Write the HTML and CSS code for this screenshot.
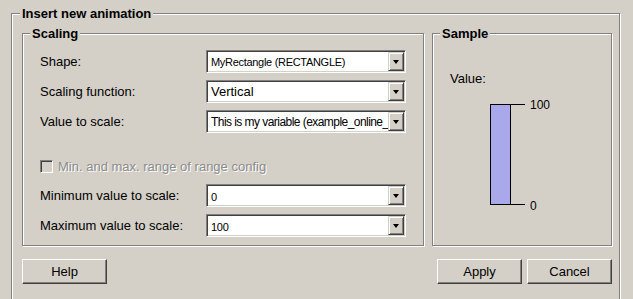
FILE: index.html
```html
<!DOCTYPE html>
<html lang="en">
<head>
  <meta charset="UTF-8">
  <title>Insert new animation</title>
  <link rel="stylesheet" href="styles.css">
</head>
<body>
  <div class="dialog">
    <span class="legend">Insert new animation</span>

    <div class="panels">
      <div class="group scaling">
        <span class="legend">Scaling</span>

        <div class="row">
          <label>Shape:</label>
          <div class="combo"><span class="value small">MyRectangle (RECTANGLE)</span><span class="drop"></span></div>
        </div>
        <div class="row">
          <label>Scaling function:</label>
          <div class="combo"><span class="value large">Vertical</span><span class="drop"></span></div>
        </div>
        <div class="row">
          <label>Value to scale:</label>
          <div class="combo"><span class="value tight">This is my variable (example_online_v</span><span class="drop"></span></div>
        </div>

        <div class="check">
          <span class="box"></span>
          <span class="disabled">Min. and max. range of range config</span>
        </div>

        <div class="row">
          <label>Minimum value to scale:</label>
          <div class="combo"><span class="value small low">0</span><span class="drop"></span></div>
        </div>
        <div class="row">
          <label>Maximum value to scale:</label>
          <div class="combo"><span class="value small low">100</span><span class="drop"></span></div>
        </div>
      </div>

      <div class="group sample">
        <span class="legend">Sample</span>
        <div class="value-label">Value:</div>
        <svg class="gauge" width="120" height="130" viewBox="0 0 120 130">
          <rect x="40.5" y="18.5" width="20" height="100" fill="#a8a8ea" stroke="#000"/>
          <line x1="60" y1="18.5" x2="75" y2="18.5" stroke="#000"/>
          <line x1="40" y1="118.5" x2="75" y2="118.5" stroke="#000"/>
          <text x="80" y="23" class="tick">100</text>
          <text x="80" y="124" class="tick">0</text>
        </svg>
      </div>
    </div>

    <div class="buttons">
      <button class="help">Help</button>
      <button>Apply</button>
      <button>Cancel</button>
    </div>
  </div>
</body>
</html>
```

FILE: styles.css
```css
html, body {
  margin: 0;
  overflow: hidden;
}
body {
  background: #d4d0c8;
  font-family: "Liberation Sans", Arial, sans-serif;
  font-size: 13px;
  color: #000;
}
.dialog {
  position: relative;
  margin: 13px 0 0 11px;
  width: 609px;
  box-sizing: border-box;
  border: 1px solid #808080;
  box-shadow: inset 1px 1px 0 #fff, 1px 1px 0 #fff;
  padding: 19px 7px 20px 10px;
}
.legend {
  position: absolute;
  top: -8px;
  left: 8px;
  padding: 0 2px;
  background: #d4d0c8;
  font-weight: bold;
  line-height: 15px;
}
.panels {
  display: flex;
  gap: 8px;
}
.group {
  position: relative;
  height: 213px;
  box-sizing: border-box;
  border: 1px solid #808080;
  box-shadow: inset 1px 1px 0 #fff, 1px 1px 0 #fff;
}
.scaling {
  width: 402px;
  padding: 16px 17px 0 17px;
}
.scaling .legend {
  left: 7px;
}
.sample {
  width: 180px;
  padding: 0 17px;
}
.sample .legend {
  left: 7px;
}
.row {
  display: flex;
  align-items: center;
  height: 23px;
  margin-bottom: 7px;
}
.row label {
  width: 166px;
  flex: none;
}
.combo {
  display: flex;
  align-items: center;
  width: 200px;
  height: 23px;
  box-sizing: border-box;
  background: #fff;
  border: 1px solid;
  border-color: #808080 #fff #fff #808080;
  box-shadow: inset 1px 1px 0 #404040, inset -1px -1px 0 #d4d0c8;
  padding: 1px;
}
.combo .value {
  flex: 1;
  overflow: hidden;
  white-space: nowrap;
  padding-left: 3px;
  font-size: 12px;
}
.combo .value.small {
  font-size: 11px;
  letter-spacing: -0.3px;
}
.combo .value.large {
  font-size: 13px;
}
.combo .value.tight {
  font-size: 12px;
  letter-spacing: -0.55px;
}
.combo .value.low {
  padding-top: 3px;
}
.drop {
  position: relative;
  flex: none;
  width: 16px;
  height: 19px;
  box-sizing: border-box;
  background: #d4d0c8;
  border: 1px solid;
  border-color: #d4d0c8 #404040 #404040 #d4d0c8;
  box-shadow: inset 1px 1px 0 #fff, inset -1px -1px 0 #808080;
}
.drop::after {
  content: "";
  position: absolute;
  left: 4px;
  top: 7px;
  border-left: 3.5px solid transparent;
  border-right: 3.5px solid transparent;
  border-top: 4px solid #000;
}
.check {
  display: flex;
  align-items: center;
  gap: 5px;
  height: 13px;
  margin: 27px 0 11px;
}
.check .box {
  width: 13px;
  height: 13px;
  box-sizing: border-box;
  border: 1px solid;
  border-color: #808080 #fff #fff #808080;
  box-shadow: inset 1px 1px 0 #404040, inset -1px -1px 0 #d4d0c8;
}
.disabled {
  color: #8c8c8c;
  text-shadow: 1px 1px 0 #fff;
}
.value-label {
  margin-top: 37px;
  line-height: 15px;
}
.gauge {
  display: block;
}
.tick {
  font-family: "Liberation Sans", Arial, sans-serif;
  font-size: 12px;
}
.buttons {
  display: flex;
  gap: 5px;
  margin-top: 13px;
}
button {
  width: 85px;
  height: 25px;
  padding: 0;
  background: #d4d0c8;
  border: 1px solid;
  border-color: #fff #404040 #404040 #fff;
  box-shadow: inset -1px -1px 0 #808080;
  font-family: "Liberation Sans", Arial, sans-serif;
  font-size: 13px;
  color: #000;
}
.help {
  margin-right: auto;
}
```
